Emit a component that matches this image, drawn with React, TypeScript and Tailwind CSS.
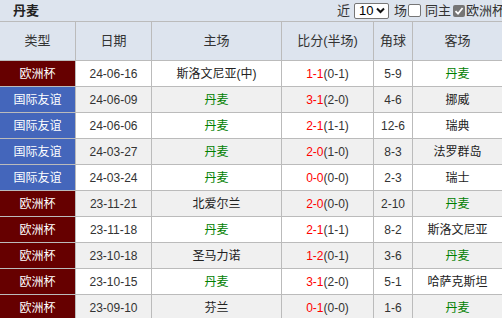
import React from 'react';

interface MatchRow {
    type: string;
    date: string;
    home: string;
    score: string;
    half: string;
    corner: string;
    away: string;
}

const rows: MatchRow[] = [
    { type: '欧洲杯', date: '24-06-16', home: '斯洛文尼亚(中)', score: '1-1', half: '(0-1)', corner: '5-9', away: '丹麦' },
    { type: '国际友谊', date: '24-06-09', home: '丹麦', score: '3-1', half: '(2-0)', corner: '4-6', away: '挪威' },
    { type: '国际友谊', date: '24-06-06', home: '丹麦', score: '2-1', half: '(1-1)', corner: '12-6', away: '瑞典' },
    { type: '国际友谊', date: '24-03-27', home: '丹麦', score: '2-0', half: '(1-0)', corner: '8-3', away: '法罗群岛' },
    { type: '国际友谊', date: '24-03-24', home: '丹麦', score: '0-0', half: '(0-0)', corner: '2-3', away: '瑞士' },
    { type: '欧洲杯', date: '23-11-21', home: '北爱尔兰', score: '2-0', half: '(0-0)', corner: '2-10', away: '丹麦' },
    { type: '欧洲杯', date: '23-11-18', home: '丹麦', score: '2-1', half: '(1-1)', corner: '8-2', away: '斯洛文尼亚' },
    { type: '欧洲杯', date: '23-10-18', home: '圣马力诺', score: '1-2', half: '(0-1)', corner: '3-6', away: '丹麦' },
    { type: '欧洲杯', date: '23-10-15', home: '丹麦', score: '3-1', half: '(2-0)', corner: '5-1', away: '哈萨克斯坦' },
    { type: '欧洲杯', date: '23-09-10', home: '芬兰', score: '0-1', half: '(0-0)', corner: '1-6', away: '丹麦' },
];

const grid = 'grid grid-cols-[76px_76px_130px_92px_39px_89px]';
const cell = 'flex items-center justify-center border-r border-[#bbbbbb] whitespace-nowrap overflow-hidden';

const teamClass = (name: string) => (name === '丹麦' ? 'text-[#008000]' : 'text-[#222]');

const App: React.FC = () => {
    return (
        <div
            className="w-[502px] h-[318px] overflow-hidden bg-white text-[12px] text-[#333]"
            style={{ fontFamily: '"Liberation Sans", "Noto Sans CJK SC", sans-serif' }}
        >
            {/* title bar */}
            <div className="h-[22px] flex items-center bg-[#dde4ee] border-b border-[#bbbbbb] whitespace-nowrap overflow-hidden">
                <span className="pl-[13px] font-bold text-[13px] text-[#222]">丹麦</span>
                <div className="ml-auto mr-[-3px] flex items-center text-[13px] text-[#333] shrink-0">
                    <span>近</span>
                    <div className="ml-[4px] w-[35px] h-[16px] bg-white border border-[#767676] rounded-[2px] flex items-center justify-between pl-[4px] pr-[3px] text-[13px] text-black">
                        <span>10</span>
                        <svg width="9" height="7" viewBox="0 0 9 7">
                            <path d="M1 1.5 L4.5 5 L8 1.5" fill="none" stroke="#111" strokeWidth="2" />
                        </svg>
                    </div>
                    <span className="ml-[5px]">场</span>
                    <span className="ml-[1px] w-[13px] h-[13px] bg-white border border-[#767676] rounded-[2px]" />
                    <span className="ml-[4px]">同主</span>
                    <span className="ml-[2px] w-[12px] h-[12px] bg-[#767676] rounded-[2px] flex items-center justify-center">
                        <svg width="10" height="10" viewBox="0 0 10 10">
                            <path d="M1.5 5.2 L4 7.7 L8.6 2" fill="none" stroke="white" strokeWidth="1.8" />
                        </svg>
                    </span>
                    <span className="ml-[1px]">欧洲杯</span>
                </div>
            </div>

            {/* header */}
            <div className={`${grid} h-[39px] bg-[#dde4ee] border-b border-[#bbbbbb] text-[13px] text-[#333]`}>
                <div className={cell}>类型</div>
                <div className={cell}>日期</div>
                <div className={cell}>主场</div>
                <div className={cell}>比分(半场)</div>
                <div className={cell}>角球</div>
                <div className={`${cell} border-r-0`}>客场</div>
            </div>

            {/* rows */}
            {rows.map((r, i) => (
                <div
                    key={r.date}
                    className={`${grid} h-[26px] border-b border-[#bbbbbb] ${i % 2 === 1 ? 'bg-[#f0f0f0]' : 'bg-white'}`}
                >
                    <div className={`${cell} text-white ${r.type === '欧洲杯' ? 'bg-[#660000]' : 'bg-[#4466bb]'}`}>{r.type}</div>
                    <div className={cell}>{r.date}</div>
                    <div className={`${cell} ${teamClass(r.home)}`}>{r.home}</div>
                    <div className={cell}>
                        <span className="text-[#ff0000]">{r.score}</span>
                        <span>{r.half}</span>
                    </div>
                    <div className={cell}>{r.corner}</div>
                    <div className={`${cell} border-r-0 ${teamClass(r.away)}`}>{r.away}</div>
                </div>
            ))}
        </div>
    );
};

export default App;
